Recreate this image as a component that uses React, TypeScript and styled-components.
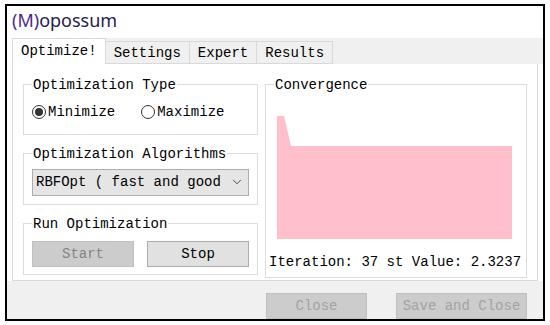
import React from "react";
import styled, { createGlobalStyle } from "styled-components";
import { ChevronDown } from "lucide-react";

const GlobalStyle = createGlobalStyle`
  html, body {
    margin: 0;
    padding: 0;
    background: #ffffff;
  }
  * {
    box-sizing: border-box;
  }
`;

const mono = `"Liberation Mono", "DejaVu Sans Mono", monospace`;

const Window = styled.div`
  margin: 4px 0 0 5px;
  width: 540px;
  height: 317px;
  border: 2px solid #000;
  overflow: hidden;
  display: flex;
  flex-direction: column;
  background: #ffffff;
`;

const TitleBar = styled.div`
  height: 32px;
  padding: 0 0 3px 5px;
  display: flex;
  align-items: center;
  font-family: "Noto Sans", "Open Sans", sans-serif;
  font-size: 18px;
  color: #26204e;

  .mark {
    color: #4b2a8a;
  }
`;

const Body = styled.div`
  height: 245px;
  padding-left: 5px;
  display: flex;
  flex-direction: column;
`;

const TabRow = styled.div`
  height: 26px;
  background: #f0f0f0;
  display: flex;
  align-items: flex-end;
`;

const Tab = styled.div<{ $active?: boolean }>`
  height: ${(p) => (p.$active ? 26 : 23)}px;
  padding: 0 8px;
  display: flex;
  align-items: center;
  font-family: ${mono};
  font-size: 14px;
  color: #000;
  background: ${(p) => (p.$active ? "#ffffff" : "#f0f0f0")};
  border: 1px solid #d9d9d9;
  border-bottom: ${(p) => (p.$active ? "none" : "1px solid #d9d9d9")};
  border-left: ${(p) => (p.$active ? "1px solid #d9d9d9" : "none")};
  padding-top: ${(p) => (p.$active ? 0 : 2)}px;
`;

const Panel = styled.div`
  flex: 1;
  margin-right: 5px;
  border: 1px solid #d9d9d9;
  border-top: none;
  background: #ffffff;
  padding: 13px 10px 0 10px;
  display: flex;
  gap: 7px;
`;

const LeftColumn = styled.div`
  width: 235px;
  display: flex;
  flex-direction: column;
  gap: 11px;
`;

const Group = styled.fieldset<{ $pt: number; $pb: number; $pl?: number }>`
  margin: 0;
  min-width: 0;
  border: 1px solid #dcdcdc;
  padding: ${(p) => p.$pt}px 8px ${(p) => p.$pb}px ${(p) => p.$pl ?? 8}px;
  font-family: ${mono};
  font-size: 14px;
  color: #000;
`;

const Legend = styled.legend<{ $ml?: number }>`
  padding: 0 1px;
  margin-left: ${(p) => p.$ml ?? 0}px;
  line-height: 16px;
  font-family: ${mono};
  font-size: 14px;
  color: #000;
`;

const RadioRow = styled.div`
  height: 16px;
  display: flex;
  align-items: center;
  gap: 26px;
`;

const RadioLabel = styled.label`
  display: flex;
  align-items: center;
  gap: 2px;
  line-height: 16px;
`;

const RadioCircle = styled.span<{ $checked?: boolean }>`
  width: 14px;
  height: 14px;
  border-radius: 50%;
  border: 1px solid #333;
  background: #fff;
  display: flex;
  align-items: center;
  justify-content: center;

  &::after {
    content: "";
    width: 8px;
    height: 8px;
    border-radius: 50%;
    background: ${(p) => (p.$checked ? "#333" : "transparent")};
  }
`;

const Combo = styled.div`
  height: 27px;
  border: 1px solid #adadad;
  background: #e5e5e5;
  display: flex;
  align-items: center;
  justify-content: space-between;
  padding: 0 4px 0 3px;
  white-space: nowrap;
`;

const ButtonRow = styled.div`
  display: flex;
  gap: 13px;
`;

const Button = styled.button<{ $width: number }>`
  width: ${(p) => p.$width}px;
  height: 26px;
  padding: 0;
  font-family: ${mono};
  font-size: 14px;
  border: 1px solid ${(p) => (p.disabled ? "#bfbfbf" : "#adadad")};
  background: ${(p) => (p.disabled ? "#cccccc" : "#e1e1e1")};
  color: ${(p) => (p.disabled ? "#838383" : "#000")};
`;

const RightGroup = styled(Group)`
  width: 262px;
  height: 201px;
  display: flex;
  flex-direction: column;
`;

const Chart = styled.svg`
  margin-left: 8px;
  display: block;
`;

const StatusText = styled.div`
  margin-top: 15px;
  line-height: 16px;
  white-space: nowrap;
`;

const Footer = styled.div`
  flex: 1;
  background: #f0f0f0;
  display: flex;
  justify-content: flex-end;
  align-items: flex-start;
  padding: 12px 16px 0 0;
  gap: 29px;
`;

const FooterButton = styled(Button)`
  color: #a3a3a3;
  flex-shrink: 0;
`;

export default function App() {
  return (
    <>
      <GlobalStyle />
      <Window>
        <TitleBar>
          <span className="mark">(M)</span>opossum
        </TitleBar>
        <Body>
          <TabRow>
            <Tab $active>Optimize!</Tab>
            <Tab>Settings</Tab>
            <Tab>Expert</Tab>
            <Tab>Results</Tab>
          </TabRow>
          <Panel>
            <LeftColumn>
              <Group $pt={11} $pb={14}>
                <Legend>Optimization Type</Legend>
                <RadioRow>
                  <RadioLabel>
                    <RadioCircle $checked />
                    Minimize
                  </RadioLabel>
                  <RadioLabel>
                    <RadioCircle />
                    Maximize
                  </RadioLabel>
                </RadioRow>
              </Group>
              <Group $pt={7} $pb={8}>
                <Legend>Optimization Algorithms</Legend>
                <Combo>
                  <span>RBFOpt ( fast and good</span>
                  <ChevronDown size={14} strokeWidth={1.5} color="#333" />
                </Combo>
              </Group>
              <Group $pt={9} $pb={7}>
                <Legend>Run Optimization</Legend>
                <ButtonRow>
                  <Button $width={102} disabled>
                    Start
                  </Button>
                  <Button $width={102}>Stop</Button>
                </ButtonRow>
              </Group>
            </LeftColumn>
            <RightGroup $pt={6} $pb={7} $pl={3}>
              <Legend $ml={5}>Convergence</Legend>
              <Chart width={235} height={140} viewBox="0 0 235 140">
                <polygon
                  points="0,17 7,17 14,47 235,47 235,140 0,140"
                  fill="#ffc0cb"
                />
              </Chart>
              <StatusText>Iteration: 37 st Value: 2.3237</StatusText>
            </RightGroup>
          </Panel>
        </Body>
        <Footer>
          <FooterButton $width={101} disabled>
            Close
          </FooterButton>
          <FooterButton $width={131} disabled>
            Save and Close
          </FooterButton>
        </Footer>
      </Window>
    </>
  );
}
